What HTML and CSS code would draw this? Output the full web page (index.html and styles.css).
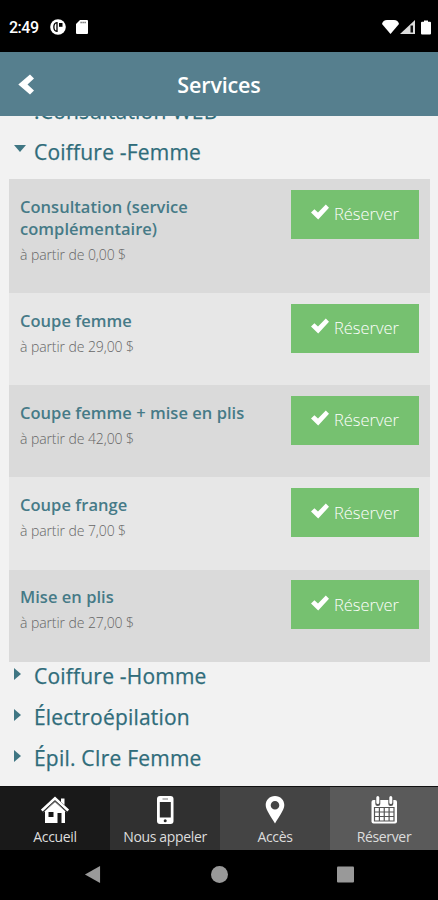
FILE: index.html
```html
<!DOCTYPE html>
<html lang="fr">
<head>
<meta charset="utf-8">
<title>Services</title>
<link rel="stylesheet" href="styles.css">
</head>
<body>
<svg width="0" height="0" class="defs">
  <symbol id="check" viewBox="0 0 18 16"><path d="M0 8.600 3.400 5.200 7 8.600 14.800.4 18 3.800 7.200 15.600Z"/></symbol>
</svg>
<div class="status">
  <span class="clock">2:49</span>
  <svg class="s-app" viewBox="0 0 16 16"><circle cx="8" cy="8" r="7.800" fill="#fff"/><path d="M7 3.600C2.800 4 2.800 12 7 12.400Z" fill="none" stroke="#000" stroke-width="1.300"/><path d="M9 4h3.500v3.800H9Z" fill="#000"/></svg>
  <svg class="s-card" viewBox="0 0 12 14"><path d="M4 0h7q1 0 1 1v12q0 1-1 1H1q-1 0-1-1V4Z" fill="#fff"/><path d="M4.500 2.500h5.500" stroke="#555" stroke-width="1.500" stroke-dasharray="1.200 .8"/></svg>
  <span class="grow"></span>
  <svg class="s-wifi" viewBox="0 0 17 14"><path d="M0 4Q1 0 5 0h7q4 0 5 4L8.500 14Z" fill="#fff"/></svg>
  <svg class="s-cell" viewBox="0 0 15 14"><path d="M15 0v14H0Z" fill="#ddd"/><path d="M10.500 5.500H13V12.500H10.500Z" fill="#111"/></svg>
  <svg class="s-batt" viewBox="0 0 10 14"><path d="M3 0h4v1.200h2q1 0 1 1V13q0 1-1 1H1q-1 0-1-1V2.200q0-1 1-1h2Z" fill="#fff"/></svg>
</div>
<header class="bar">
  <svg class="back" viewBox="0 0 16 21"><path d="M12 .5 16 4.400 9.500 10.500 16 16.600 12 20.500.3 10.500Z" fill="#fff"/></svg>
  <h1>Services</h1>
</header>
<main class="content">
  <div class="category clipped"><i class="arrow"></i><span>!Consultation WEB</span></div>
  <div class="category open"><i class="arrow down"></i><span>Coiffure -Femme</span></div>
  <ul class="services">
    <li class="tall"><div class="info"><h2>Consultation (service complémentaire)</h2><p>à partir de 0,00 $</p></div><a class="book"><svg><use href="#check"/></svg><span>Réserver</span></a></li>
    <li><div class="info"><h2>Coupe femme</h2><p>à partir de 29,00 $</p></div><a class="book"><svg><use href="#check"/></svg><span>Réserver</span></a></li>
    <li><div class="info"><h2>Coupe femme + mise en plis</h2><p>à partir de 42,00 $</p></div><a class="book"><svg><use href="#check"/></svg><span>Réserver</span></a></li>
    <li><div class="info"><h2>Coupe frange</h2><p>à partir de 7,00 $</p></div><a class="book"><svg><use href="#check"/></svg><span>Réserver</span></a></li>
    <li><div class="info"><h2>Mise en plis</h2><p>à partir de 27,00 $</p></div><a class="book"><svg><use href="#check"/></svg><span>Réserver</span></a></li>
  </ul>
  <div class="category"><i class="arrow"></i><span>Coiffure -Homme</span></div>
  <div class="category"><i class="arrow"></i><span>Électroépilation</span></div>
  <div class="category"><i class="arrow"></i><span>Épil. CIre Femme</span></div>
</main>
<nav class="tabs">
  <a class="t1"><svg viewBox="0 0 28 28"><path d="M4 14.500 14 5.500 24 14.500V27H20.500V17H16.500V27H4Z" fill="#fff"/><path d="M.8 14.500 14 2.200 27.200 14.500" fill="none" stroke="#fff" stroke-width="2.600"/><path d="M2.500 16.200 14 5.700 25.500 16.200" fill="none" stroke="#777" stroke-width="1"/><path d="M20 2.500h3.500V9L20 6Z" fill="#fff"/><path d="M7.500 16h5v5h-5Z" fill="#181818"/></svg><span>Accueil</span></a>
  <a class="t2"><svg viewBox="0 0 28 28"><rect x="6" width="16.500" height="28" rx="3" fill="#fff"/><path d="M8.800 6h11v15.500h-11Z" fill="#2b2b2b"/><path d="M11.500 3h5.500" stroke="#777"/><circle cx="14.200" cy="24.800" r="1.500" fill="#2b2b2b"/></svg><span>Nous appeler</span></a>
  <a class="t3"><svg viewBox="0 0 28 28"><path fill-rule="evenodd" d="M14 0C8.500 0 4.700 4 4.700 9c0 5 5 11 9.300 18.500C18.300 20 23.300 14 23.300 9 23.300 4 19.500 0 14 0Zm0 5a4.300 4.300 0 1 1 0 8.600 4.300 4.300 0 0 1 0-8.600Z" fill="#fff"/></svg><span>Accès</span></a>
  <a class="t4"><svg viewBox="0 0 28 28"><rect x="1.500" y="4" width="25.500" height="23.500" rx="2" fill="#fff"/><path d="M7.800 1.500v6M20.800 1.500v6" stroke="#555" stroke-width="5" stroke-linecap="round"/><path d="M7.800 1.500v5M20.800 1.500v5" stroke="#fff" stroke-width="3" stroke-linecap="round"/><path d="M4.500 11.500H24V25H4.500ZM4.500 16H24M4.500 20.500H24M9.400 11.500V25M14.250 11.500V25M19.100 11.500V25" fill="none" stroke="#555" stroke-width="1.200"/></svg><span>Réserver</span></a>
</nav>
<footer class="system">
  <svg viewBox="0 0 16 18"><path d="M16 0v18L0 9Z"/></svg>
  <svg viewBox="0 0 16 16"><circle cx="8" cy="8" r="8"/></svg>
  <svg viewBox="0 0 17 16"><rect width="17" height="16" rx="1"/></svg>
</footer>
</body>
</html>
```
FILE: styles.css
```css
* { box-sizing: border-box; margin: 0; padding: 0; }
body { width: 438px; height: 900px; overflow: hidden; display: flex; flex-direction: column; background: #f2f2f2; font-family: "Open Sans", sans-serif; }
.defs { display: none; }
.status { height: 52px; flex: none; background: #000; display: flex; align-items: center; padding: 2px 7px 0 9px; color: #fff; }
.clock { font: 500 16px Roboto, sans-serif; letter-spacing: -.5px; width: 41px; }
.grow { flex: 1; }
.s-app { width: 16px; height: 16px; margin-right: 10px; }
.s-card { width: 12px; height: 14px; }
.s-wifi { width: 17px; height: 14px; }
.s-cell { width: 15px; height: 14px; margin: 0 6px 0 1px; }
.s-batt { width: 10px; height: 15px; }
.bar { height: 64px; flex: none; background: #567f8e; display: grid; grid-template-columns: 52px 1fr 52px; align-items: center; }
.back { width: 16px; height: 21px; margin-left: 18px; }
.bar h1 { text-align: center; color: #fff; font-size: 21.500px; font-weight: 600; letter-spacing: -.15px; line-height: 30px; padding-top: 2px; }
.content { flex: 1; min-height: 0; overflow: hidden; }
.category { height: 41px; display: flex; align-items: flex-start; padding-left: 14px; color: #2f6c7a; font-size: 21px; font-weight: 400; line-height: 28px; -webkit-text-stroke: .25px #2f6c7a; }
.category span { letter-spacing: .2px; }
.clipped { margin-top: -19px; }
.open { height: 41px; }
.arrow { width: 20px; height: 18px; flex: none; }
.arrow::before { content: ""; display: block; margin-top: 6px; width: 0; border-left: 7px solid #3f7683; border-top: 6px solid transparent; border-bottom: 6px solid transparent; }
.arrow.down::before { margin-top: 7px; border-top: 7px solid #3f7683; border-left: 6px solid transparent; border-right: 6px solid transparent; border-bottom: 0; }
.services { list-style: none; margin: 0 8px 0 9px; }
.services li { height: 92.200px; display: flex; justify-content: space-between; padding: 10.500px 11px 0; background: #e7e7e7; }
.services li:nth-child(odd) { background: #dadada; }
.services .tall { height: 114px; }
.info { width: 240px; padding-top: 6px; }
.tall .info { width: 200px; }
.info h2 { color: #467a87; font-size: 16.500px; font-weight: 600; letter-spacing: .03px; line-height: 22.500px; }
.info p { color: #666; font-size: 14px; font-weight: 300; letter-spacing: -.08px; line-height: 20px; margin-top: 4.500px; }
.tall .info p { margin-top: 4px; }
.book { width: 128px; height: 49px; flex: none; background: #76c170; color: #fff; display: flex; align-items: center; justify-content: center; gap: 5px; font-size: 16.500px; font-weight: 300; padding-bottom: .5px; }
.book svg { width: 18px; height: 16px; fill: #fff; margin-top: -3px; }
.tabs { height: 64px; flex: none; display: grid; grid-template-columns: 110px 110px 110px 108px; border-top: 1px solid #111; }
.tabs a { display: flex; flex-direction: column; align-items: center; padding-top: 9px; color: #ddd; font-size: 14px; font-weight: 400; letter-spacing: -.35px; line-height: 20px; }
.tabs svg { width: 28px; height: 28px; margin-bottom: 3px; }
.t1 { background: #191919; }
.t2 { background: #303030; }
.t3 { background: #444; }
.t4 { background: #5a5a5a; }
.system { height: 50px; flex: none; background: #000; display: flex; padding: 16px 84px 0; justify-content: space-between; }
.system svg { height: 17px; width: 17px; fill: #999; }
```
